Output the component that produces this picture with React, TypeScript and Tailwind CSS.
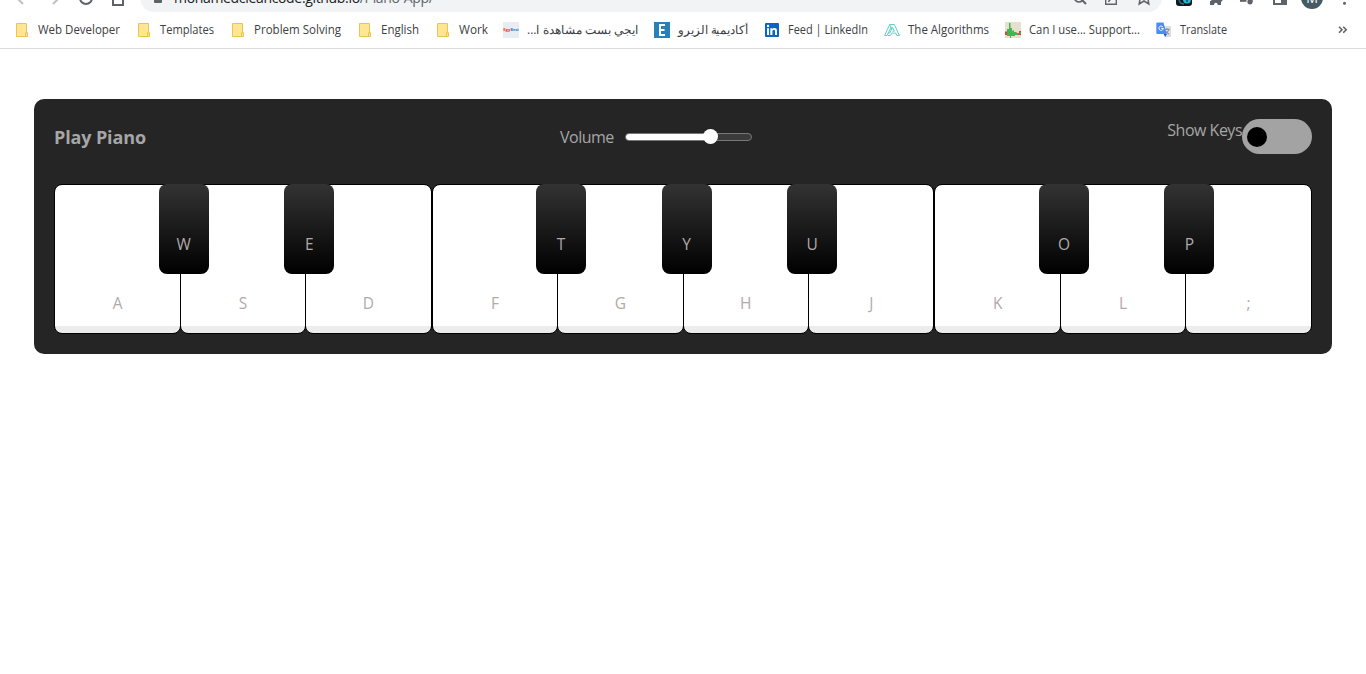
import type { ReactNode } from 'react';

const SANS = "font-['Open_Sans','Noto_Sans',sans-serif]";

function Folder() {
  return (
    <svg width="16" height="16" viewBox="0 0 16 16">
      <path d="M2.500 1.500h10v9.200h1v3.800h-11z" fill="#ffe694" stroke="#eac54f" />
      <path d="M11.500 14v-3.300h1.600" fill="none" stroke="#eac54f" />
    </svg>
  );
}

function EgyBest() {
  return (
    <svg width="16" height="16" viewBox="0 0 16 16">
      <rect width="16" height="16" fill="#e9ecf2" />
      <text x="0.200" y="9.400" fontSize="4.200" fontWeight="800" fontFamily="Open Sans" textLength="7.300" lengthAdjust="spacingAndGlyphs" fill="#ef4a2f">Egy</text>
      <text x="7.600" y="9.400" fontSize="4.200" fontWeight="800" fontFamily="Open Sans" textLength="8.200" lengthAdjust="spacingAndGlyphs" fill="#3a88c8">Best</text>
    </svg>
  );
}

function Elzero() {
  return (
    <svg width="16" height="16" viewBox="0 0 16 16">
      <rect width="16" height="16" fill="#2980b9" />
      <path d="M11 3H6v10h5M6 8h4.500" fill="none" stroke="#fff" strokeWidth="2" />
    </svg>
  );
}

function LinkedIn() {
  return (
    <svg width="16" height="16" viewBox="0 0 16 16">
      <rect x="1" y="1" width="14" height="14" rx="1" fill="#0a66c2" />
      <path d="M3 6.200h2V13H3zM6.300 6.200h2v1c.4-.7 1.100-1.200 2.100-1.200 2 0 2.600 1.200 2.600 3.100V13h-2V9.500c0-1-.2-1.700-1.100-1.700-1 0-1.500.7-1.500 1.700V13h-2.100z" fill="#fff" />
      <circle cx="4" cy="4" r="1.200" fill="#fff" />
    </svg>
  );
}

function Algorithms() {
  return (
    <svg width="16" height="16" viewBox="0 0 16 16" fill="none" stroke="#5fd3c4" strokeWidth="1">
      <path d="M.6 13.500 5.600 2.500h4.800l5 11h-2.600l-1-2.400H7.600l-1.200 2.400M.6 13.500h2.600l4-8.700M3.600 11h2.200l2.600-5.700 2 3.900H8.600M5.600 2.500l2.600 5M4 13.500h2.400" />
    </svg>
  );
}

function CanIUse() {
  return (
    <svg width="16" height="16" viewBox="0 0 16 16">
      <rect width="16" height="16" fill="#e8e0cf" />
      <path d="M0 9.500h2v2h7v-1h3v1h2V9h2v4H0z" fill="#d1443c" />
      <path d="M2 13V7h2V1h1.500v5H7v3l2-1v2h2v1h4v-1h1v2h-3v1h-3v1H6v2H5v-2H2z" fill="#43b454" />
    </svg>
  );
}

function Translate() {
  return (
    <svg width="16" height="16" viewBox="0 0 16 16">
      <path d="M6 4h8.200c.5 0 .8.3.8.8v9.400c0 .5-.3.8-.8.8H9z" fill="#dcdfe1" />
      <path d="M8.600 7.300h5M11 6.200v1.100M12.700 7.500c-.5 2-1.600 3.200-3.200 4.300M9.500 8.800c.8 1.600 2 2.700 3.700 3.400" stroke="#7b8791" fill="none" />
      <path d="M1.200.5h6.300l3.100 11.500H1.200c-.6 0-.9-.4-.9-1V1.500c0-.6.3-1 .9-1z" fill="#4c8bf5" />
      <path d="m7.600 12 1.500 3 2-3z" fill="#2a5bd0" />
      <path d="M6.700 4.700a2.200 2.200 0 1 0 .6 1.600H5.200" fill="none" stroke="#fff" />
    </svg>
  );
}

type Bookmark = { label: string; icon: ReactNode; slot: string; text: string; rtl?: boolean };

const bookmarks: Bookmark[] = [
  { label: 'Web Developer', icon: <Folder />, slot: 'w-[122px]', text: 'w-[82px]' },
  { label: 'Templates', icon: <Folder />, slot: 'w-[94px]', text: 'w-[54px]' },
  { label: 'Problem Solving', icon: <Folder />, slot: 'w-[127px]', text: 'w-[87px]' },
  { label: 'English', icon: <Folder />, slot: 'w-[78px]', text: 'w-[38px]' },
  { label: 'Work', icon: <Folder />, slot: 'w-[68px]', text: 'w-[29px]' },
  { label: 'ايجي بست مشاهدة ا...', icon: <EgyBest />, slot: 'w-[151px]', text: 'w-[111px]', rtl: true },
  { label: 'أكاديمية الزيرو', icon: <Elzero />, slot: 'w-[110px]', text: 'w-[70px]', rtl: true },
  { label: 'Feed | LinkedIn', icon: <LinkedIn />, slot: 'w-[120px]', text: 'w-[80px]' },
  { label: 'The Algorithms', icon: <Algorithms />, slot: 'w-[121px]', text: 'w-[81px]' },
  { label: 'Can I use... Support...', icon: <CanIUse />, slot: 'w-[151px]', text: 'w-[111px]' },
  { label: 'Translate', icon: <Translate />, slot: 'w-[120px]', text: 'w-[47px]' },
];

function Toolbar() {
  return (
    <div className="flex h-3 items-end overflow-hidden">
      <svg className="w-[140px] shrink-0" height="12" viewBox="0 0 140 12" fill="none">
        <path d="m23 4-6-6M53 4l6-6" stroke="#bdc1c6" strokeWidth="2" />
        <circle cx="86" cy="-2" r="6" stroke="#5f6368" strokeWidth="2" />
        <path d="M113-4v9h10v-9" stroke="#5f6368" strokeWidth="2" />
      </svg>
      <div className="flex h-7 w-[1022px] shrink-0 items-center rounded-full bg-[#f1f3f4] pl-[14px]">
        <span className="mt-1 h-[6px] w-2 rounded-b-[1px] bg-[#5f6368]" />
        <span className="ml-3 -mt-px text-[14px] leading-5 tracking-[-0.33px] whitespace-nowrap text-[#202124]">
          mohamedcleancode.github.io<span className="text-[#5f6368]">/Piano-App/</span>
        </span>
      </div>
      <svg className="-ml-[102px] w-[306px] shrink-0" height="12" viewBox="1060 0 306 12" fill="none">
        <circle cx="1079" cy="-2.500" r="4.500" stroke="#5f6368" strokeWidth="1.700" />
        <path d="m1082 0 4 4" stroke="#5f6368" strokeWidth="2" />
        <path d="M1105.700-3v7.300h10.600V0M1108.500 2c.7-2 2-3 4.500-3.400" stroke="#5f6368" strokeWidth="1.400" />
        <path d="m1140.300-3-1.100 7 4.800-3 4.800 3-1.100-7" stroke="#5f6368" strokeWidth="1.500" />
        <rect x="1176" y="-10" width="16" height="16" rx="3" fill="#14181d" />
        <path d="M1179 0c1 3 3 4 5 4" stroke="#18768c" strokeWidth="1.500" />
        <circle cx="1187" cy="-.5" r="4" fill="#20b8d2" />
        <path d="M1187-2v4" stroke="#14181d" />
        <path d="M1210-4h11v3c2 0 2 2.500 0 2.500V5h-3.300c0-3-3.700-3-3.700 0h-4V1c2 0 2-2 0-2z" fill="#5f6368" />
        <path d="M1240 .8h6.500" stroke="#5f6368" strokeWidth="2" />
        <circle cx="1250" cy="1.800" r="2.600" fill="#5f6368" />
        <path d="M1251.700 2v-6" stroke="#5f6368" strokeWidth="1.800" />
        <path d="M1274-4v8h12v-8" stroke="#5f6368" strokeWidth="2" />
        <path d="M1281-4h6v8h-6z" fill="#5f6368" />
        <circle cx="1312" cy="-2" r="11" fill="#455a64" />
        <text x="1312" y="3" textAnchor="middle" fontSize="13" fontFamily="Open Sans" fill="#fff">M</text>
        <circle cx="1344.500" cy="3.300" r="1.500" fill="#5f6368" />
      </svg>
    </div>
  );
}

function BookmarksBar() {
  return (
    <div className="flex h-[37px] items-center border-b border-[#dadce0] pl-[14px]">
      {bookmarks.map((b) => (
        <div key={b.label} className={`flex shrink-0 items-center gap-2 ${b.slot}`}>
          <span className="shrink-0">{b.icon}</span>
          <svg className={`shrink-0 overflow-visible ${b.text}`} height="16">
            <text
              x={b.rtl ? '100%' : 0}
              y="12"
              direction={b.rtl ? 'rtl' : 'ltr'}
              fontSize="12"
              fill="#3c4043"
              textLength="100%"
              lengthAdjust="spacingAndGlyphs"
            >
              {b.label}
            </text>
          </svg>
        </div>
      ))}
      <svg className="ml-[62px]" width="10" height="10" viewBox="0 0 10 10" fill="none" stroke="#5f6368" strokeWidth="1.600">
        <path d="m1 1.800 3 3-3 3M5.200 1.800l3 3-3 3" />
      </svg>
    </div>
  );
}

const keys = ['A', 'W', 'S', 'E', 'D', 'F', 'T', 'G', 'Y', 'H', 'U', 'J', 'K', 'O', 'L', 'P', ';'];
const blackKeys = new Set(['W', 'E', 'T', 'Y', 'U', 'O', 'P']);

function Key({ name }: { name: string }) {
  if (blackKeys.has(name)) {
    return (
      <li className="z-10 -mr-[29px] -ml-[22px] flex h-[90px] w-[50px] shrink-0 items-end justify-center rounded-[8px] bg-[linear-gradient(#333,#000)] pb-[19px] text-[15.500px] leading-[22px] text-[#b2a9a9]">
        {name}
      </li>
    );
  }
  return (
    <li className="flex h-[150px] min-w-0 flex-1 items-end justify-center rounded-[8px] border border-black bg-[linear-gradient(to_top,#ececec_7px,#fff_7px)] pb-[19px] text-[15.500px] leading-[22px] text-[#b2a9a9]">
      {name}
    </li>
  );
}

export default function App() {
  return (
    <div className={`h-[674px] overflow-hidden bg-white ${SANS}`}>
      <Toolbar />
      <BookmarksBar />
      <main className="mx-[34px] mt-[50px] h-[255px] rounded-[10px] bg-[#252525] p-5 text-[#a6a6a6]">
        <header className="flex h-[35px] items-center">
          <h2 className="w-[506px] text-[18px] leading-6 font-bold tracking-[-0.13px]">Play Piano</h2>
          <label className="flex items-center">
            <span className="w-[65px] text-[16px] leading-6 tracking-[-0.5px]">Volume</span>
            <span className="relative block h-2 w-[127px] rounded-full border border-[#777] bg-[#3b3b3b]">
              <span className="block h-full w-[86px] rounded-l-full bg-white" />
              <span className="absolute -top-[4.500px] left-[77px] size-[15px] rounded-full bg-white" />
            </span>
          </label>
          <div className="ml-auto flex h-[35px]">
            <span className="-mt-px text-[16px] leading-6 tracking-[-0.5px] whitespace-nowrap">Show Keys</span>
            <span className="flex h-[35px] w-[70px] items-center rounded-full bg-[#a3a3a3] pl-[5px]">
              <span className="size-5 rounded-full bg-black" />
            </span>
          </div>
        </header>
        <ul className="mt-[30px] ml-[0.32px] flex w-[1257.500px]">
          {keys.map((k) => (
            <Key key={k} name={k} />
          ))}
        </ul>
      </main>
    </div>
  );
}
